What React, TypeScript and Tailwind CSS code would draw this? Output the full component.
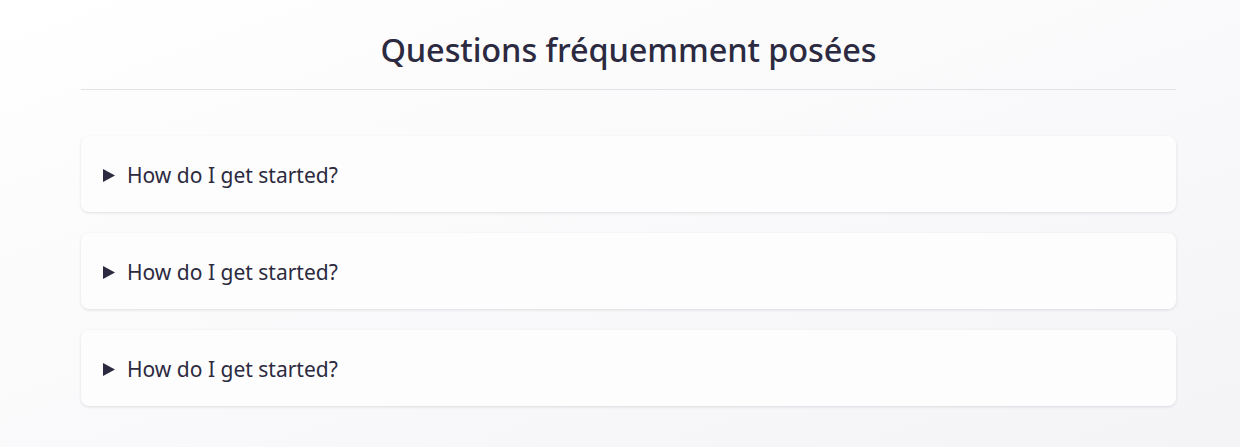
const faqs = [
  { q: 'How do I get started?', a: 'Create an account and follow the onboarding steps.' },
  { q: 'How do I get started?', a: 'Create an account and follow the onboarding steps.' },
  { q: 'How do I get started?', a: 'Create an account and follow the onboarding steps.' },
]

export default function App() {
  return (
    <div className="min-h-[447px] bg-gradient-to-br from-white to-[#f4f4f7] font-['Noto_Sans',sans-serif] text-[#2c2a40]">
      <div className="pl-[81px] pr-[64px] pt-[24px]">
        <h1 className="text-center text-[32.5px] leading-[52px] font-medium tracking-[-0.1px] pb-[13px] border-b border-[#e2e1e8]">
          Questions fréquemment posées
        </h1>
        <div className="mt-[46px] flex flex-col gap-[21px]">
          {faqs.map((f, i) => (
            <details
              key={i}
              className="bg-[#fdfdfd] rounded-lg shadow-[0_1px_3px_rgba(30,30,60,0.12)] px-[22px]"
            >
              <summary className="h-[76px] pt-[3px] flex items-center cursor-pointer text-[21px] list-none">
                <svg width="12" height="13" viewBox="0 0 12 13" className="mr-[12px]">
                  <path d="M0 0 L12 6.5 L0 13 Z" fill="currentColor" />
                </svg>
                {f.q}
              </summary>
              <p className="pb-5 text-[16px] text-[#55536a]">{f.a}</p>
            </details>
          ))}
        </div>
      </div>
    </div>
  )
}
